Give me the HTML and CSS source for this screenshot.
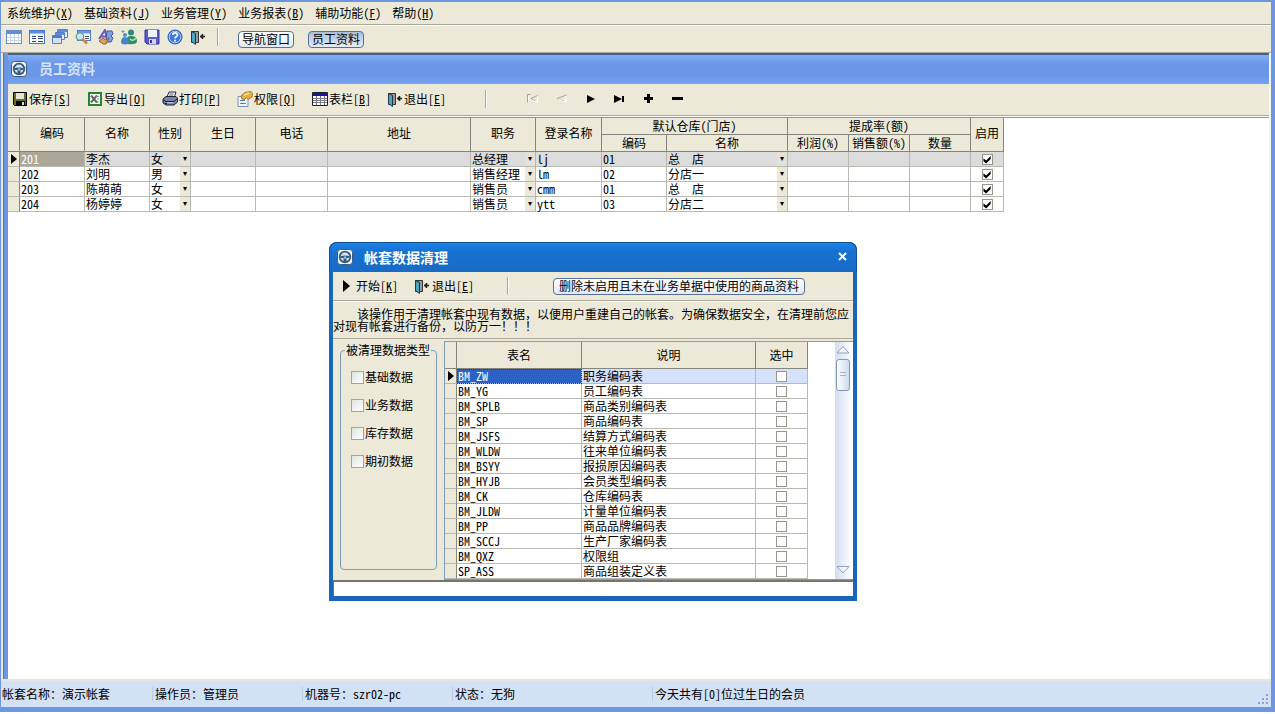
FILE: index.html
```
<!DOCTYPE html>
<html lang="zh-CN">
<head>
<meta charset="utf-8">
<title>员工资料</title>
<link rel="stylesheet" href="styles.css">
</head>
<body>
<svg class="defs" aria-hidden="true">
  <symbol id="i-wheel" viewBox="0 0 16 16"><rect x=".5" y=".5" width="15" height="15" rx="3" fill="#f4f8fc" stroke="#3c5a80"/><circle cx="8" cy="8" r="5.300" fill="#dbe8f4" stroke="#35597f" stroke-width="1.800"/><path d="M3 7.500q5-2 10 0l-1 1.500H9.500v4h-3V9H4z" fill="#35597f"/><circle cx="8" cy="8.500" r="1.200" fill="#8fc0e6"/></symbol>
  <symbol id="i-exit" viewBox="0 0 16 16"><path d="M1.500 2.500h7v11h-7z" fill="#9a9a94" stroke="#333"/><path d="M1.500 2.500l4 2v11l-4-3z" fill="#4aa6c8" stroke="#234"/><path d="M10 7.500h5M12.500 5v5" stroke="#222" stroke-width="1.500"/><path d="M10 7.500L12.500 5v5z" fill="#222"/></symbol>
  <symbol id="i-grid" viewBox="0 0 16 16"><rect x=".5" y="1.500" width="15" height="13" fill="#fff" stroke="#6a8ecc"/><path d="M1 2h14v3H1z" fill="#5c8ee0"/><path d="M1 8.500h14M1 11.500h14M4.500 5v9M8.500 5v9M12.500 5v9" stroke="#c4d6ee"/></symbol>
  <symbol id="i-form" viewBox="0 0 16 16"><rect x=".5" y="1.500" width="15" height="13" fill="#f4f8ff" stroke="#4a78c4"/><path d="M1 2h14v2.500H1z" fill="#5a8cdc"/><path d="M3 7.500h4M3 9.500h4M3 12.500h4M9 7.500h5M9 9.500h5M9 12.500h5" stroke="#334a78"/></symbol>
  <symbol id="i-windows" viewBox="0 0 16 16"><path d="M5.500.5h10v8h-10z" fill="#e4eefc" stroke="#5a80c4"/><path d="M6 1h9v2H6z" fill="#5a8cdc"/><path d="M3.500 3.500h9v7h-9z" fill="#e4eefc" stroke="#5a80c4"/><path d="M4 4h8v2H4z" fill="#5a8cdc"/><path d="M.5 6.500h9v8h-9z" fill="#d4e2f8" stroke="#5a80c4"/><path d="M1 7h8v2H1z" fill="#4a7cd0"/></symbol>
  <symbol id="i-find" viewBox="0 0 16 16"><rect x="2.500" y="1.500" width="13" height="10" fill="#f4f8ff" stroke="#4a78c4"/><path d="M3 2h12v2.500H3z" fill="#6a9ae0"/><path d="M10 7.500h4M10 9.500h4" stroke="#556"/><circle cx="5" cy="7.500" r="3.700" fill="#c8ecec" stroke="#6a9a9a" stroke-width="1.300"/><path d="M8 10.500l4 4" stroke="#c98a30" stroke-width="2.500"/></symbol>
  <symbol id="i-sort" viewBox="0 0 16 16"><path d="M1 10L7 1l2 9M3 7.500h5" fill="none" stroke="#6a5ac0" stroke-width="2"/><path d="M9 2h5l1 3-2 2 2 2-2 4H8z" fill="#7d9fe4" stroke="#4658a8"/><path d="M1 12l4-3 3 2 3-2-3 6H5z" fill="#d9a05a" stroke="#94623a"/></symbol>
  <symbol id="i-users" viewBox="0 0 16 16"><circle cx="10" cy="3.500" r="3" fill="#2f8a78"/><path d="M5 14q0-8 5-7 6 0 6 5 0 3-4 3-5 1-7-1z" fill="#2e8b70"/><circle cx="4" cy="6" r="2" fill="#4a94c8"/><path d="M0 14q0-6 4-6 4 1 4 6-4 3-8 0z" fill="#4585c4"/><path d="M9 10q3 3 6-1" stroke="#b4e0a0" stroke-width="1.500" fill="none"/><path d="M2 1v3M.5 2.500h3" stroke="#60a898"/></symbol>
  <symbol id="i-disk" viewBox="0 0 16 16"><path d="M1 1h14v14H3l-2-2z" fill="#5a5acc" stroke="#34349c"/><path d="M4 1h9v7H4z" fill="#eef2fc"/><path d="M5 10h7v5H5z" fill="#d4d8ec"/><path d="M6 11h2v3H6z" fill="#34349c"/></symbol>
  <symbol id="i-help" viewBox="0 0 16 16"><circle cx="8" cy="8" r="7" fill="#3c7ae0" stroke="#2858b4"/><circle cx="8" cy="8" r="5.800" fill="none" stroke="#c4dcff" stroke-width=".8"/><path d="M5.800 6q0-2.200 2.300-2.200T10.400 6q0 1-1.200 1.700T8 9.500M8 10.800v1.700" fill="none" stroke="#fff" stroke-width="1.700"/></symbol>
  <symbol id="i-save" viewBox="0 0 16 16"><path d="M1.500 1.500h13v13h-12l-1-1z" fill="#6b6b1c" stroke="#000"/><path d="M4 2h8v6H4z" fill="#e4e4d8"/><path d="M4 10h9v5H4z" fill="#000"/><path d="M10 11h2v3h-2z" fill="#ddd"/></symbol>
  <symbol id="i-xls" viewBox="0 0 16 16"><path d="M2 2h12v12H2z" fill="#fff" stroke="#1d8a2d" stroke-width="2"/><path d="M4 4.500l6 7M10 4.500l-6 7" stroke="#666" stroke-width="2"/><path d="M9 5.500h3M10 8h2M10 11h2" stroke="#888"/></symbol>
  <symbol id="i-print" viewBox="0 0 16 16"><path d="M5 6l2-5h7l-2 6z" fill="#fff" stroke="#223"/><path d="M7.500 3h4M7 5h4" stroke="#556"/><path d="M1 8l3-2.500h10l1.500 1.500v4L12 14H4l-3-2z" fill="#7c84a8" stroke="#1c2238"/><path d="M1 9l3 1.500h8L15 8M3 12.500h8" stroke="#1c2238" fill="none"/><path d="M5 12h6" stroke="#fff"/></symbol>
  <symbol id="i-perm" viewBox="0 0 16 16"><path d="M1 5.500h10v10H1z" fill="#eef4fc" stroke="#7a94b8"/><path d="M3 9.500h5M3 12.500h6" stroke="#4c80c0"/><path d="M4 5l4-3.500 6-1 1.500 2L15 6l-4 2.500-1.500-2L7 9 5 8z" fill="#e8b040" stroke="#a8782a"/><path d="M7 4l5-2" stroke="#fce49a" stroke-width="1.500"/></symbol>
  <symbol id="i-cols" viewBox="0 0 16 16"><path d="M.5 1.500h15v13H.5z" fill="#fff" stroke="#222"/><path d="M1 2h14v3H1z" fill="#1818a8"/><path d="M1 7.500h14M1 9.500h14M1 11.500h14M4.500 5v9M8.500 5v9M12.500 5v9" stroke="#778"/></symbol>
</svg>

<div class="app">
  <nav class="menubar">
    <button>系统维护(<u>X</u>)</button>
    <button>基础资料(<u>J</u>)</button>
    <button>业务管理(<u>Y</u>)</button>
    <button>业务报表(<u>B</u>)</button>
    <button>辅助功能(<u>F</u>)</button>
    <button>帮助(<u>H</u>)</button>
  </nav>
  <div class="toolbar">
    <div class="icons">
      <button aria-label="表格"><svg><use href="#i-grid"/></svg></button>
      <button aria-label="表单"><svg><use href="#i-form"/></svg></button>
      <button aria-label="窗口"><svg><use href="#i-windows"/></svg></button>
      <button aria-label="查找"><svg><use href="#i-find"/></svg></button>
      <button aria-label="排序"><svg><use href="#i-sort"/></svg></button>
      <button aria-label="用户"><svg><use href="#i-users"/></svg></button>
      <button aria-label="保存"><svg><use href="#i-disk"/></svg></button>
      <button aria-label="帮助"><svg><use href="#i-help"/></svg></button>
      <button aria-label="退出"><svg><use href="#i-exit"/></svg></button>
    </div>
    <span class="sep"></span>
    <div class="tabs">
      <button class="pill">导航窗口</button>
      <button class="pill active">员工资料</button>
    </div>
  </div>

  <main class="child">
    <header class="child-title"><svg><use href="#i-wheel"/></svg><h1>员工资料</h1></header>
    <div class="actions">
      <div class="commands">
        <button><svg><use href="#i-save"/></svg>保存[<u>S</u>]</button>
        <button><svg><use href="#i-xls"/></svg>导出[<u>O</u>]</button>
        <button><svg><use href="#i-print"/></svg>打印[<u>P</u>]</button>
        <button><svg><use href="#i-perm"/></svg>权限[<u>Q</u>]</button>
        <button><svg><use href="#i-cols"/></svg>表栏[<u>B</u>]</button>
        <button><svg><use href="#i-exit"/></svg>退出[<u>E</u>]</button>
      </div>
      <span class="sep"></span>
      <div class="records">
        <button aria-label="第一条" disabled><svg viewBox="0 0 13 13"><path d="M1.500 10.500v-8h3M11.500 3.500L5 6.500l5 3" fill="none" stroke="#aaa797"/><path d="M2.500 11V4M6 8.500l5.500 2v-6" fill="none" stroke="#fff"/></svg></button>
        <button aria-label="上一条" disabled><svg viewBox="0 0 13 13"><path d="M11.500 3L2 6.500l7 3" fill="none" stroke="#aaa797"/><path d="M3 7.500l8 3V4" fill="none" stroke="#fff"/></svg></button>
        <button aria-label="下一条"><svg viewBox="0 0 13 13"><path d="M3 3l8 4-8 4z"/></svg></button>
        <button aria-label="最后一条"><svg viewBox="0 0 13 13"><path d="M1 3l8 4-8 4zM9 4h2v6H9z"/></svg></button>
        <button aria-label="增加"><svg viewBox="0 0 13 13"><path d="M5 2h3v3h3v3H8v3H5V8H2V5h3z"/></svg></button>
        <button aria-label="删除"><svg viewBox="0 0 13 13"><path d="M1 5h11v3H1z"/></svg></button>
      </div>
    </div>
    <div class="sheet">
      <table class="grid staff">
        <colgroup><col class="w12"><col class="w65"><col class="w65"><col class="w41"><col class="w65"><col class="w72"><col class="w143"><col class="w65"><col class="w66"><col class="w65"><col class="w121"><col class="w61"><col class="w61"><col class="w61"><col class="w33"></colgroup>
        <thead>
          <tr><th rowspan="2"></th><th rowspan="2">编码</th><th rowspan="2">名称</th><th rowspan="2">性别</th><th rowspan="2">生日</th><th rowspan="2">电话</th><th rowspan="2">地址</th><th rowspan="2">职务</th><th rowspan="2">登录名称</th><th colspan="2">默认仓库(门店)</th><th colspan="3">提成率(额)</th><th rowspan="2">启用</th></tr>
          <tr><th>编码</th><th>名称</th><th>利润(%)</th><th>销售额(%)</th><th>数量</th></tr>
        </thead>
        <tbody>
          <tr class="current"><th class="mark"></th><td class="focus">201</td><td>李杰</td><td><span class="pick"><select aria-label="性别"><option>女</option></select></span></td><td></td><td></td><td></td><td><span class="pick"><select aria-label="职务"><option>总经理</option></select></span></td><td>lj</td><td>01</td><td><span class="pick"><select aria-label="仓库"><option>总　店</option></select></span></td><td></td><td></td><td></td><td class="tick"><input type="checkbox" aria-label="启用" checked></td></tr>
          <tr><th></th><td>202</td><td>刘明</td><td><span class="pick"><select aria-label="性别"><option>男</option></select></span></td><td></td><td></td><td></td><td><span class="pick"><select aria-label="职务"><option>销售经理</option></select></span></td><td>lm</td><td>02</td><td><span class="pick"><select aria-label="仓库"><option>分店一</option></select></span></td><td></td><td></td><td></td><td class="tick"><input type="checkbox" aria-label="启用" checked></td></tr>
          <tr><th></th><td>203</td><td>陈萌萌</td><td><span class="pick"><select aria-label="性别"><option>女</option></select></span></td><td></td><td></td><td></td><td><span class="pick"><select aria-label="职务"><option>销售员</option></select></span></td><td>cmm</td><td>01</td><td><span class="pick"><select aria-label="仓库"><option>总　店</option></select></span></td><td></td><td></td><td></td><td class="tick"><input type="checkbox" aria-label="启用" checked></td></tr>
          <tr><th></th><td>204</td><td>杨婷婷</td><td><span class="pick"><select aria-label="性别"><option>女</option></select></span></td><td></td><td></td><td></td><td><span class="pick"><select aria-label="职务"><option>销售员</option></select></span></td><td>ytt</td><td>03</td><td><span class="pick"><select aria-label="仓库"><option>分店二</option></select></span></td><td></td><td></td><td></td><td class="tick"><input type="checkbox" aria-label="启用" checked></td></tr>
        </tbody>
      </table>
    </div>
  </main>

  <footer class="status">
    <span>帐套名称：演示帐套</span><span>操作员：管理员</span><span>机器号：szr02-pc</span><span>状态：无狗</span><span>今天共有[0]位过生日的会员</span>
    <svg class="grip" viewBox="0 0 11 11"><path d="M8 0h2v2H8zM8 4h2v2H8zM4 4h2v2H4zM8 8h2v2H8zM4 8h2v2H4zM0 8h2v2H0z" fill="#8ea6cf"/></svg>
  </footer>
</div>

<section class="dialog" role="dialog" aria-labelledby="dlg-title">
  <header class="dialog-title">
    <svg><use href="#i-wheel"/></svg><h2 id="dlg-title">帐套数据清理</h2>
    <button class="close" aria-label="关闭"><svg viewBox="0 0 9 9"><path d="M1 1l7 7M8 1L1 8" stroke="#fff" stroke-width="2"/></svg></button>
  </header>
  <div class="dialog-body">
    <div class="dialog-actions">
      <div class="dialog-commands">
        <button><svg viewBox="0 0 16 16"><path d="M5 2l7 6-7 6z"/></svg>开始[<u>K</u>]</button>
        <button><svg><use href="#i-exit"/></svg>退出[<u>E</u>]</button>
      </div>
      <span class="sep"></span>
      <button class="pill wide">删除未启用且未在业务单据中使用的商品资料</button>
    </div>
    <p class="notice">该操作用于清理帐套中现有数据，以便用户重建自己的帐套。为确保数据安全，在清理前您应对现有帐套进行备份，以防万一！！！</p>
    <div class="panes">
      <fieldset class="types">
        <legend>被清理数据类型</legend>
        <label><input type="checkbox">基础数据</label>
        <label><input type="checkbox">业务数据</label>
        <label><input type="checkbox">库存数据</label>
        <label><input type="checkbox">期初数据</label>
      </fieldset>
      <div class="list">
        <table class="grid tables">
          <colgroup><col class="w12"><col class="w125"><col class="w174"><col class="w52"></colgroup>
          <thead><tr><th></th><th>表名</th><th>说明</th><th>选中</th></tr></thead>
          <tbody>
            <tr class="current"><th class="mark"></th><td class="focus">BM_ZW</td><td>职务编码表</td><td class="tick"><input type="checkbox" aria-label="选中"></td></tr>
            <tr><th></th><td>BM_YG</td><td>员工编码表</td><td class="tick"><input type="checkbox" aria-label="选中"></td></tr>
            <tr><th></th><td>BM_SPLB</td><td>商品类别编码表</td><td class="tick"><input type="checkbox" aria-label="选中"></td></tr>
            <tr><th></th><td>BM_SP</td><td>商品编码表</td><td class="tick"><input type="checkbox" aria-label="选中"></td></tr>
            <tr><th></th><td>BM_JSFS</td><td>结算方式编码表</td><td class="tick"><input type="checkbox" aria-label="选中"></td></tr>
            <tr><th></th><td>BM_WLDW</td><td>往来单位编码表</td><td class="tick"><input type="checkbox" aria-label="选中"></td></tr>
            <tr><th></th><td>BM_BSYY</td><td>报损原因编码表</td><td class="tick"><input type="checkbox" aria-label="选中"></td></tr>
            <tr><th></th><td>BM_HYJB</td><td>会员类型编码表</td><td class="tick"><input type="checkbox" aria-label="选中"></td></tr>
            <tr><th></th><td>BM_CK</td><td>仓库编码表</td><td class="tick"><input type="checkbox" aria-label="选中"></td></tr>
            <tr><th></th><td>BM_JLDW</td><td>计量单位编码表</td><td class="tick"><input type="checkbox" aria-label="选中"></td></tr>
            <tr><th></th><td>BM_PP</td><td>商品品牌编码表</td><td class="tick"><input type="checkbox" aria-label="选中"></td></tr>
            <tr><th></th><td>BM_SCCJ</td><td>生产厂家编码表</td><td class="tick"><input type="checkbox" aria-label="选中"></td></tr>
            <tr><th></th><td>BM_QXZ</td><td>权限组</td><td class="tick"><input type="checkbox" aria-label="选中"></td></tr>
            <tr><th></th><td>SP_ASS</td><td>商品组装定义表</td><td class="tick"><input type="checkbox" aria-label="选中"></td></tr>
          </tbody>
        </table>
        <div class="scrollbar">
          <button aria-label="向上"><svg viewBox="0 0 16 16"><path d="M2 11L8 4.500 14 11z" fill="#f4f6fc" stroke="#8fa0c0"/></svg></button>
          <span class="thumb"></span>
          <button class="down" aria-label="向下"><svg viewBox="0 0 16 16"><path d="M2 3.500L8 10l6-6.500z" fill="#f4f6fc" stroke="#8fa0c0"/></svg></button>
        </div>
      </div>
    </div>
    <div class="progress"></div>
  </div>
</section>
</body>
</html>
```
FILE: styles.css
```
* { box-sizing: border-box; }
html, body { height: 100%; }
body {
  margin: 0;
  background: #fff;
  color: #000;
  font: 12px/14px "Noto Sans Mono CJK SC", "Noto Sans CJK SC", "Liberation Sans", sans-serif;
}
button, select, input { font: inherit; color: inherit; margin: 0; }
button {
  padding: 0;
  border: 0;
  background: none;
  display: flex;
  align-items: center;
  white-space: nowrap;
}
svg { display: block; width: 16px; height: 16px; flex: none; }
.defs { position: absolute; width: 0; height: 0; }
h1, h2, p { margin: 0; }
u { text-underline-offset: 1px; }

.app {
  height: calc(100vh - 2px);
  display: flex;
  flex-direction: column;
  background: #ece9d8;
  border: solid #6c96e0;
  border-width: 2px 4px 5px 1px;
}
.menubar {
  display: flex;
  gap: 11px;
  height: 23px;
  padding: 0 6px;
  border-bottom: 1px solid #aca899;
}
.toolbar {
  display: flex;
  align-items: center;
  height: 28px;
  padding-left: 5px;
  border-top: 1px solid #fff;
  border-bottom: 1px solid #aca899;
}
.icons { display: flex; gap: 7px; padding-bottom: 4px; }
.sep { width: 2px; height: 18px; border-left: 1px solid #aca899; border-right: 1px solid #fff; }
.toolbar .sep { margin: 0 19px 4px 11px; }
.tabs { display: flex; gap: 14px; }
.pill {
  height: 17px;
  padding: 0 3px;
  border: 1px solid #53719c;
  border-radius: 4px;
  background: linear-gradient(#fff, #e4e9f4);
}
.pill.active { background: linear-gradient(#a9bedb, #e2ecf8); }
.pill.wide { padding: 0 5px; }

.child {
  flex: 1;
  min-height: 0;
  display: flex;
  flex-direction: column;
  margin-left: 3px;
  border: solid #6c96e0;
  border-width: 0 2px 0 4px;
  border-right-color: #f8f7f1;
  box-shadow: -1px 0 #68727f;
  background: #fff;
}
.child-title {
  display: flex;
  align-items: center;
  gap: 12px;
  height: 31px;
  padding: 0 3px 2px;
  border-top: 2px solid #45628f;
  background: linear-gradient(#83acf4, #6c98e9 30%, #6a96e8 70%, #78a2ef);
}
.child-title h1 { font-size: 14px; line-height: 18px; padding-bottom: 2px; color: #d5e3fb; }
.actions {
  display: flex;
  align-items: center;
  height: 32px;
  padding: 0 0 2px 4px;
  background: #ece9d8;
  border-bottom: 1px solid #aca899;
}
.commands { display: grid; grid-template-columns: repeat(6, 75px); }
.commands svg { margin-right: 1px; }
.actions .sep { margin: 0 39px 0 23px; }
.records { display: flex; gap: 16px; }
.records svg { width: 13px; height: 13px; }
.sheet { flex: 1; overflow: hidden; border-top: 1px solid #7a98c0; margin-top: 1px; }

.grid { border-collapse: separate; border-spacing: 0; table-layout: fixed; }
.staff { width: 996px; }
.tables { width: 363px; background: #fff; }
.w12 { width: 12px; } .w33 { width: 33px; } .w41 { width: 41px; } .w52 { width: 52px; }
.w61 { width: 61px; } .w65 { width: 65px; } .w66 { width: 66px; } .w72 { width: 72px; }
.w121 { width: 121px; } .w125 { width: 125px; } .w143 { width: 143px; } .w174 { width: 174px; }
.grid th, .grid td {
  height: 15px;
  padding: 0;
  line-height: 14px;
  font-weight: normal;
  white-space: nowrap;
  border: solid #b9b9b4;
  border-width: 0 1px 1px 0;
}
.grid th { background: #ece9d8; }
.grid thead th { border-color: #85857d; height: 17px; }
.grid thead th[rowspan] { padding-bottom: 3px; }
.grid tbody th { border-right-color: #85857d; }
.grid td { padding-left: 1px; background: #fff; }
.tables thead th { height: 27px; }
.staff .current td { background: #dcdcdc; }
.tables .current td { background: #d5e2fa; }
.staff .current .focus { background: #aca899; color: #fff; }
.tables .current .focus { background: #2c62c6; color: #fff; outline: 1px dotted #4a3a10; outline-offset: -1px; }
.mark::before {
  content: "";
  display: block;
  width: 6px;
  height: 10px;
  margin: 0 3px;
  background: #000;
  clip-path: polygon(0 0, 100% 50%, 0 100%);
}
.pick { display: flex; align-items: center; height: 14px; }
.pick select {
  flex: 1;
  min-width: 0;
  height: 14px;
  padding: 0;
  border: 0;
  background: none;
  appearance: none;
}
.pick::after {
  content: "▾";
  flex: none;
  width: 10px;
  font: 8px/14px "DejaVu Sans", sans-serif;
  text-align: center;
  background: #ece9d8;
}
.staff .current .pick::after { background: #e4e2d8; }
.grid .tick { padding: 0; }
.tick input {
  appearance: none;
  display: block;
  width: 11px;
  height: 11px;
  margin: 1px auto 0;
  border: 1px solid #96968c;
  background: #fff;
}
.tick input:checked::before {
  content: "";
  display: block;
  width: 9px;
  height: 9px;
  background: #000;
  clip-path: polygon(10% 35%, 40% 60%, 90% 10%, 90% 45%, 40% 95%, 10% 70%);
}

.status {
  display: grid;
  grid-template-columns: 150px 150px 150px 200px 1fr 11px;
  align-items: center;
  height: 28px;
  padding: 0 2px 0 1px;
  border-top: 2px solid #e6e5dd;
  background: #d3e1f5;
}
.status span + span { border-left: 1px solid #bccbe2; padding-left: 2px; }
.status .grip { width: 11px; height: 11px; align-self: end; margin-bottom: 2px; }

.dialog {
  position: absolute;
  left: 329px;
  top: 242px;
  width: 528px;
  border: solid #1a66b8;
  border-width: 0 4px 5px;
  border-radius: 8px 8px 0 0;
  background: #1a66b8;
}
.dialog-title {
  display: flex;
  align-items: center;
  height: 30px;
  margin: 0 -4px;
  padding: 0 9px 2px 7px;
  border: solid #12508f;
  border-width: 1px 1px 0;
  border-radius: 8px 8px 0 0;
  background: linear-gradient(#1a84e8, #1870d0 30%, #176bc6);
}
.dialog-title h2 { flex: 1; margin-left: 11px; font-size: 14px; line-height: 18px; color: #fff; }
.close svg { width: 9px; height: 9px; }
.dialog-body { background: #ece9d8; }
.dialog-actions {
  display: flex;
  align-items: center;
  height: 29px;
  padding-left: 5px;
  border-bottom: 1px solid #aca899;
}
.dialog-commands { display: flex; gap: 16px; }
.dialog-commands svg { margin-right: 2px; }
.dialog-actions .sep { margin: 0 44px 0 33px; }
.notice {
  height: 38px;
  padding-top: 6px;
  line-height: 12px;
  text-indent: 24px;
  border-top: 1px solid #fff;
  border-bottom: 1px solid #aca899;
}
.panes { display: flex; gap: 7px; padding: 2px 0 0 7px; }
.types {
  flex: 1;
  min-width: 0;
  margin: 2px 0 10px;
  padding: 13px 10px;
  display: flex;
  flex-direction: column;
  gap: 14px;
  border: 1px solid #7f9db9;
  border-radius: 4px;
}
.types legend { margin: 0 -6px; padding: 0 1px; white-space: nowrap; }
.types label { display: flex; align-items: center; gap: 1px; }
.types input {
  appearance: none;
  width: 13px;
  height: 13px;
  border: 1px solid #9aa8a4;
  background: linear-gradient(135deg, #dfe4de, #fff);
}
.list {
  flex: none;
  width: 409px;
  display: flex;
  justify-content: space-between;
  padding-right: 2px;
  border: solid #7f9db9;
  border-width: 1px 0 1px 1px;
  background: #fff;
}
.scrollbar {
  width: 16px;
  display: flex;
  flex-direction: column;
  background: linear-gradient(90deg, #d3dcf0, #fbfcff);
}
.thumb {
  width: 14px;
  height: 32px;
  margin: 1px 1px;
  border: 1px solid #8598bd;
  border-radius: 3px;
  background: linear-gradient(#9fb0cd 0 0) center 12px / 6px 1px no-repeat, linear-gradient(#9fb0cd 0 0) center 15px / 6px 1px no-repeat, linear-gradient(90deg, #fff, #cfdaf0);
}
.down { margin-top: auto; }
.progress { height: 16px; background: #fff; border: solid #77756c; border-width: 2px 0 0 1px; }
```
